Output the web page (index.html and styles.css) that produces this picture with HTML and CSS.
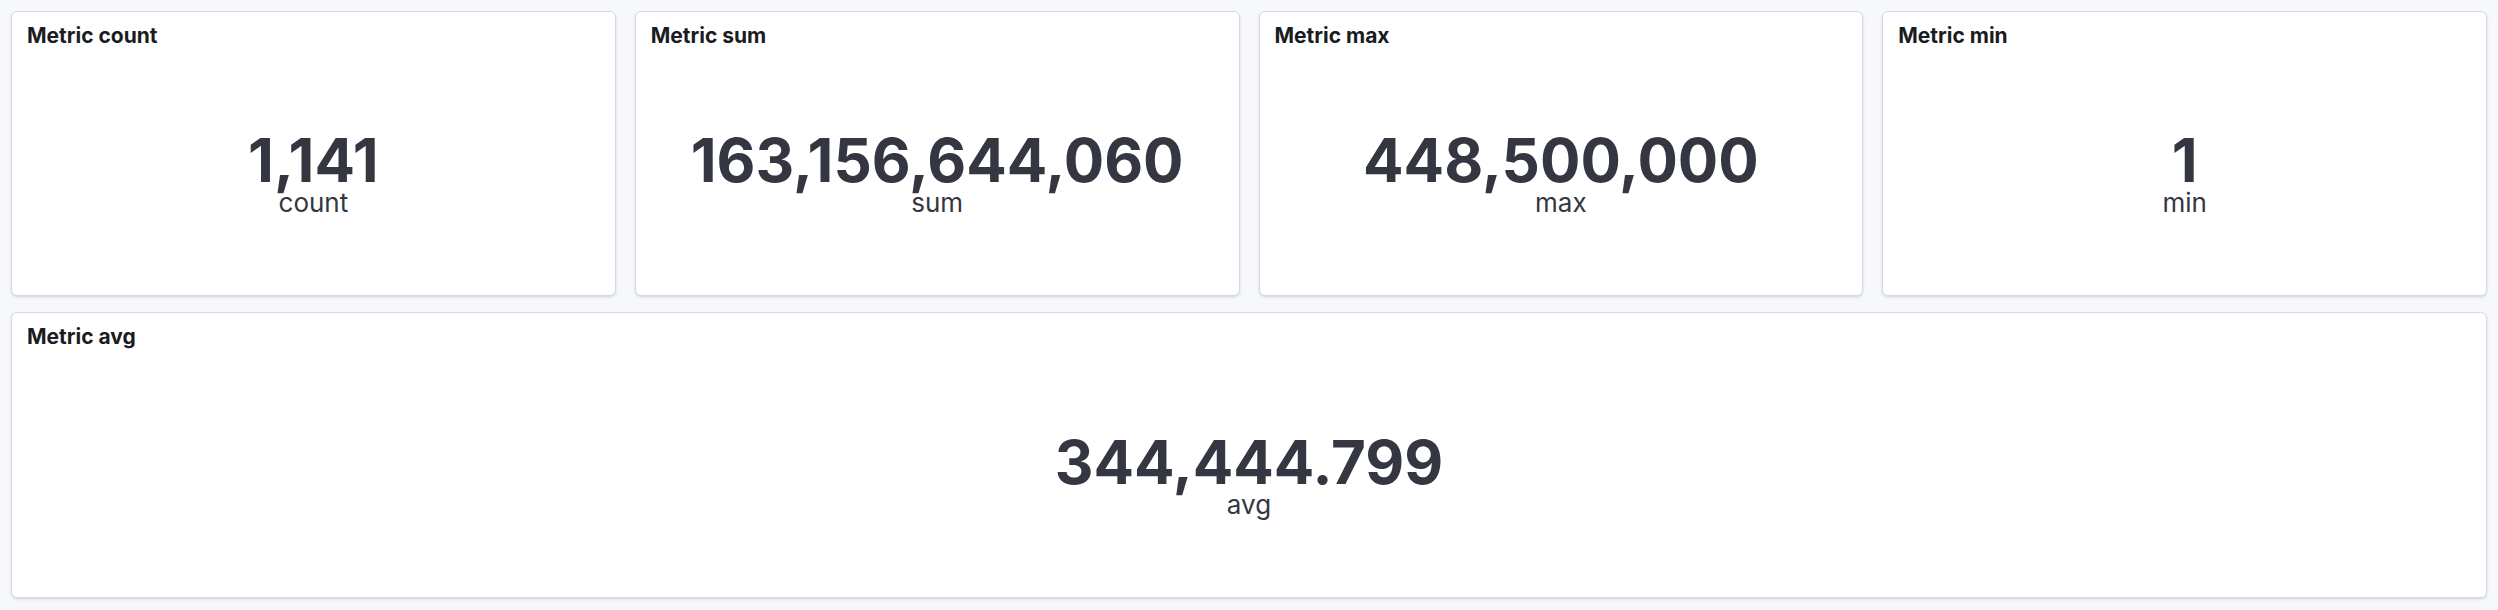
FILE: index.html
```html
<!DOCTYPE html>
<html lang="en">
<head>
<meta charset="utf-8">
<title>Metrics dashboard</title>
<link rel="stylesheet" href="styles.css">
</head>
<body>
<main class="dashboard">
  <section class="panel">
    <h2 class="panel-title">Metric count</h2>
    <div class="metric">
      <div class="metric-value">1,141</div>
      <div class="metric-label">count</div>
    </div>
  </section>
  <section class="panel">
    <h2 class="panel-title">Metric sum</h2>
    <div class="metric">
      <div class="metric-value">163,156,644,060</div>
      <div class="metric-label">sum</div>
    </div>
  </section>
  <section class="panel">
    <h2 class="panel-title">Metric max</h2>
    <div class="metric">
      <div class="metric-value">448,500,000</div>
      <div class="metric-label">max</div>
    </div>
  </section>
  <section class="panel">
    <h2 class="panel-title">Metric min</h2>
    <div class="metric">
      <div class="metric-value">1</div>
      <div class="metric-label">min</div>
    </div>
  </section>
  <section class="panel panel-wide">
    <h2 class="panel-title">Metric avg</h2>
    <div class="metric">
      <div class="metric-value">344,444.799</div>
      <div class="metric-label">avg</div>
    </div>
  </section>
</main>
</body>
</html>
```

FILE: styles.css
```css
html, body {
  margin: 0;
  padding: 0;
  background: #f7f8fc;
  font-family: Inter, "Noto Sans", sans-serif;
}

.dashboard {
  display: grid;
  grid-template-columns: repeat(4, 1fr);
  grid-template-rows: 285px 286px;
  column-gap: 19px;
  row-gap: 16px;
  padding: 11px 11px 12px 11px;
  box-sizing: border-box;
  width: 2498px;
  height: 610px;
}

.panel {
  background: #ffffff;
  border: 1px solid #d3dae6;
  border-radius: 6px;
  box-shadow: 0 1px 2px rgba(152, 162, 179, 0.25), 0 2px 4px -1px rgba(152, 162, 179, 0.2);
  display: flex;
  flex-direction: column;
  box-sizing: border-box;
  min-width: 0;
}

.panel-wide {
  grid-column: 1 / -1;
}

.panel-title {
  margin: 0;
  padding: 11px 15px 0 15px;
  font-size: 21px;
  line-height: 26px;
  font-weight: 700;
  color: #1a1c21;
}

.metric {
  flex: 1;
  display: flex;
  flex-direction: column;
  align-items: center;
  justify-content: center;
  color: #343741;
  padding-top: 1px;
}

.metric-value {
  font-size: 60px;
  font-weight: 700;
  line-height: 60px;
}

.metric-label {
  font-size: 26px;
  line-height: 25px;
}
```
